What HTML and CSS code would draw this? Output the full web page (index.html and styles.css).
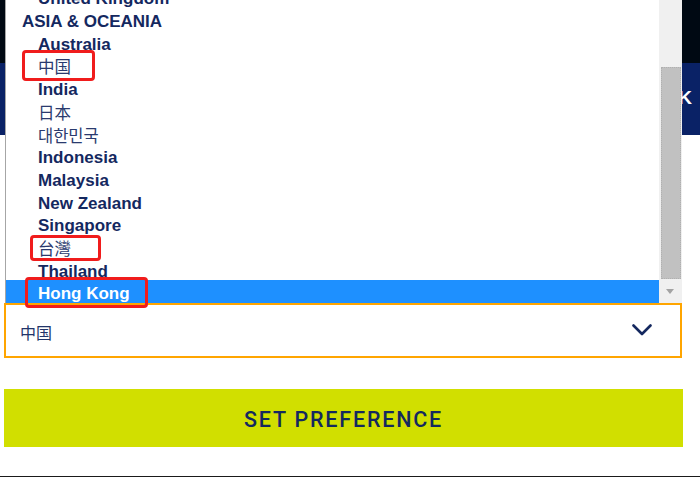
FILE: index.html
```html
<!DOCTYPE html>
<html lang="en">
<head>
<meta charset="utf-8">
<title>Set preference</title>
<link rel="stylesheet" href="styles.css">
</head>
<body>
<div class="page">
  <header class="topbar"></header>
  <nav class="navband"><span class="navtext">K</span></nav>
  <form class="pref">
    <div class="select-wrap">
      <div class="listbox">
        <div class="options">
          <div class="opt">United Kingdom</div>
          <div class="group">ASIA &amp; OCEANIA</div>
          <div class="opt">Australia</div>
          <div class="opt cjk">中国</div>
          <div class="opt">India</div>
          <div class="opt cjk">日本</div>
          <div class="opt cjk kr">대한민국</div>
          <div class="opt">Indonesia</div>
          <div class="opt">Malaysia</div>
          <div class="opt">New Zealand</div>
          <div class="opt">Singapore</div>
          <div class="opt cjk tc">台灣</div>
          <div class="opt">Thailand</div>
          <div class="opt selected">Hong Kong</div>
        </div>
        <div class="scrollbar">
          <div class="thumb"></div>
          <div class="arrow"></div>
        </div>
      </div>
      <div class="select">
        <span class="select-value">中国</span>
        <svg class="chevron" width="20" height="12" viewBox="0 0 20 12"><path d="M1.5 1.5 L10 10 L18.5 1.5" fill="none" stroke="#14285f" stroke-width="2.6" stroke-linecap="round" stroke-linejoin="round"/></svg>
      </div>
    </div>
    <button type="button" class="submit">SET PREFERENCE</button>
  </form>
  <div class="bottom-line"></div>
  <div class="annot annot-cn"></div>
  <div class="annot annot-tw"></div>
  <div class="annot annot-hk"></div>
</div>
</body>
</html>
```
FILE: styles.css
```css
* { box-sizing: border-box; }
html, body { margin: 0; padding: 0; background: #fff; }
.page {
  position: relative;
  width: 700px;
  height: 477px;
  overflow: hidden;
  display: flex;
  flex-direction: column;
  font-family: "Liberation Sans", Arial, sans-serif;
}
.topbar { height: 63px; background: #000913; flex: none; }
.navband {
  height: 72px;
  flex: none;
  background: #0a2266;
  display: flex;
  align-items: center;
  justify-content: flex-end;
  padding-right: 8px;
}
.navtext { color: #fff; font-weight: 700; font-size: 19px; margin-top: -2px; }
.pref {
  margin-top: 168px;
  padding: 0 17px 0 4px;
  display: flex;
  flex-direction: column;
}
.select-wrap { position: relative; margin-right: 1px; }
.listbox {
  position: absolute;
  left: 1px;
  right: 0;
  bottom: 100%;
  height: 303px;
  background: #fff;
  border-left: 1px solid #a6a6a6;
  display: flex;
  z-index: 2;
}
.options {
  flex: 1;
  display: flex;
  flex-direction: column;
  justify-content: flex-end;
  overflow: hidden;
}
.opt, .group {
  flex: none;
  height: 22.7px;
  line-height: 27px;
  font-size: 17px;
  font-weight: 700;
  color: #14285f;
  white-space: nowrap;
}
.group { padding-left: 16px; }
.opt { padding-left: 32px; }
.opt.cjk {
  font-family: "Noto Sans CJK SC", sans-serif;
  font-weight: 400;
  font-size: 16.5px;
  color: #2a3a6e;
  line-height: 26px;
}
.opt.kr { font-family: "Noto Sans CJK KR", sans-serif; }
.opt.tc { font-family: "Noto Sans CJK TC", sans-serif; }
.opt.selected { background: #1e90ff; color: #fff; }
.scrollbar {
  width: 23px;
  flex: none;
  background: #f0f0f0;
  display: flex;
  flex-direction: column;
}
.thumb {
  margin: 67px 1px 0 2px;
  height: 212px;
  background: #c1c1c1;
  border: 1px dotted #b0b0b0;
}
.arrow {
  margin-top: auto;
  height: 22px;
  position: relative;
}
.arrow::after {
  content: "";
  position: absolute;
  left: 7px;
  top: 8px;
  border-left: 4.5px solid transparent;
  border-right: 4.5px solid transparent;
  border-top: 5px solid #a3a3a3;
}
.select {
  height: 55px;
  border: 2px solid #ffa500;
  background: #fff;
  display: flex;
  align-items: center;
  justify-content: space-between;
  padding: 0 28px 0 14px;
}
.select-value {
  font-family: "Noto Sans CJK SC", sans-serif;
  font-size: 16px;
  color: #22356a;
  margin-top: 2px;
}
.chevron { display: block; margin-top: -2px; }
.submit {
  margin-top: 31px;
  height: 58px;
  width: 100%;
  border: none;
  background: #d1df00;
  color: #14285f;
  font-family: Roboto, "Liberation Sans", sans-serif;
  font-weight: 500;
  font-size: 21.5px;
  letter-spacing: 1.8px;
  padding: 2px 0 0;
}
.bottom-line {
  margin-top: auto;
  height: 1px;
  background: #1a1a1a;
  margin-bottom: 0;
}
.annot {
  position: absolute;
  border: 3px solid #f01c1c;
  border-radius: 4px;
  z-index: 5;
}
.annot-cn { left: 22px; top: 50px; width: 73px; height: 31px; }
.annot-tw { left: 30px; top: 235px; width: 71px; height: 26px; }
.annot-hk { left: 25px; top: 277px; width: 123px; height: 31px; }
```
